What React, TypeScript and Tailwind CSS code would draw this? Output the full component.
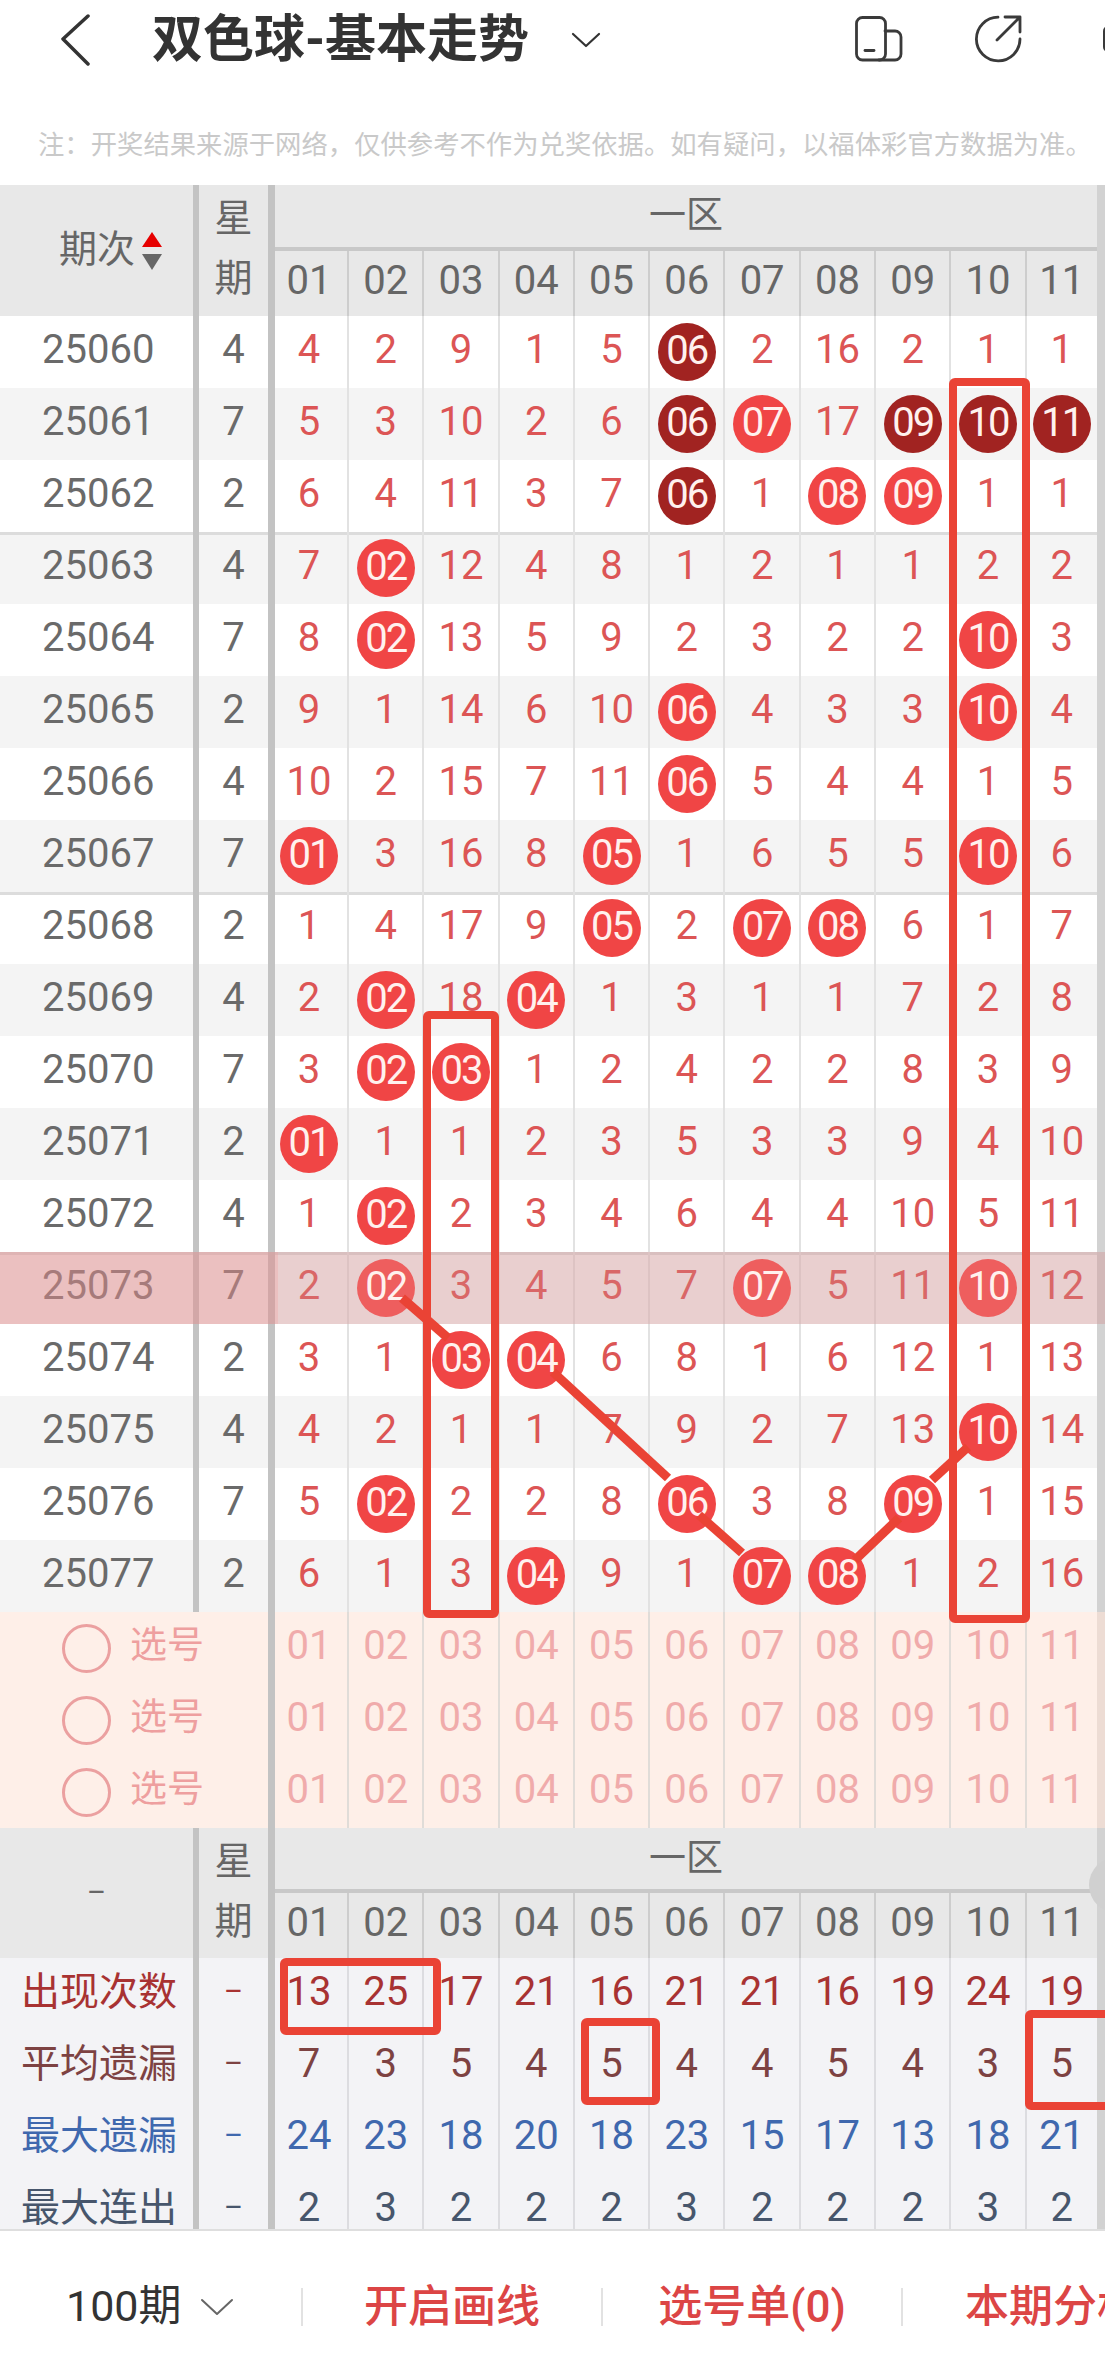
const FONT = "font-['Roboto','Noto_Sans_CJK_SC',sans-serif]";

// D = dark ball, B = bright ball
const DRAWS: [string, string, string][] = [
  ["25060", "4", "4 2 9 1 5 D06 2 16 2 1 1"],
  ["25061", "7", "5 3 10 2 6 D06 B07 17 D09 D10 D11"],
  ["25062", "2", "6 4 11 3 7 D06 1 B08 B09 1 1"],
  ["25063", "4", "7 B02 12 4 8 1 2 1 1 2 2"],
  ["25064", "7", "8 B02 13 5 9 2 3 2 2 B10 3"],
  ["25065", "2", "9 1 14 6 10 B06 4 3 3 B10 4"],
  ["25066", "4", "10 2 15 7 11 B06 5 4 4 1 5"],
  ["25067", "7", "B01 3 16 8 B05 1 6 5 5 B10 6"],
  ["25068", "2", "1 4 17 9 B05 2 B07 B08 6 1 7"],
  ["25069", "4", "2 B02 18 B04 1 3 1 1 7 2 8"],
  ["25070", "7", "3 B02 B03 1 2 4 2 2 8 3 9"],
  ["25071", "2", "B01 1 1 2 3 5 3 3 9 4 10"],
  ["25072", "4", "1 B02 2 3 4 6 4 4 10 5 11"],
  ["25073", "7", "2 B02 3 4 5 7 B07 5 11 B10 12"],
  ["25074", "2", "3 1 B03 B04 6 8 1 6 12 1 13"],
  ["25075", "4", "4 2 1 1 7 9 2 7 13 B10 14"],
  ["25076", "7", "5 B02 2 2 8 B06 3 8 B09 1 15"],
  ["25077", "2", "6 1 3 B04 9 1 B07 B08 1 2 16"],
];

const STATS = [
  { label: "出现次数", color: "text-[#a83232]", values: "13 25 17 21 16 21 21 16 19 24 19" },
  { label: "平均遗漏", color: "text-[#7d4242]", values: "7 3 5 4 5 4 4 5 4 3 5" },
  { label: "最大遗漏", color: "text-[#3f68ae]", values: "24 23 18 20 18 23 15 17 13 18 21" },
  { label: "最大连出", color: "text-[#47566c]", values: "2 3 2 2 2 3 2 2 2 3 2" },
];

const NUMBERS = ["01", "02", "03", "04", "05", "06", "07", "08", "09", "10", "11"];

function colWidth(i: number) {
  if (i === 0) return "w-[74px] pr-1 border-r-2";
  if (i === 10) return "w-[70.3px]";
  return "w-[75.3px] border-r-2";
}

function Divider({ wide }: { wide?: boolean }) {
  return <div className={`${wide ? "w-[7px]" : "w-[6px]"} shrink-0 self-stretch bg-[#c3c3c3]`} />;
}

function EdgeBar() {
  return <div className="w-[8px] shrink-0 self-stretch bg-[#d2d2d2]" />;
}

function Ball({ value, faded }: { value: string; faded?: boolean }) {
  const dark = value[0] === "D";
  return (
    <span
      className={`relative z-10 flex h-[58px] w-[58px] shrink-0 items-center justify-center rounded-full pb-[3px] text-[40px] tracking-[-2px] text-[#fff1ee] ${
        faded ? "bg-[#ee5e5e]" : dark ? "bg-[#a12321]" : "bg-[#f04545]"
      }`}
    >
      {value.slice(1)}
    </span>
  );
}

function Cell({ value, i, line, faded }: { value: string; i: number; line: string; faded?: boolean }) {
  const ball = value[0] === "D" || value[0] === "B";
  return (
    <div className={`flex h-full shrink-0 items-center justify-center ${colWidth(i)} ${line} ${ball ? "" : "pb-[5px]"}`}>
      {ball ? <Ball value={value} faded={faded} /> : value}
    </div>
  );
}

function DrawRow({ draw, index }: { draw: [string, string, string]; index: number }) {
  const [issue, week, cells] = draw;
  const grouped = index > 0 && index % 5 === 3;
  const highlighted = issue === "25073";
  return (
    <div
      className={`relative flex h-[72px] items-center text-[40px] ${index % 2 ? "bg-[#f4f4f4]" : "bg-white"} ${
        grouped ? "shadow-[inset_0_3px_0_#dcdcdc]" : ""
      }`}
    >
      <div className="w-[193px] shrink-0 pb-[5px] pl-[42px] text-[#6a6a6a]">{issue}</div>
      <Divider />
      <div className="w-[69px] shrink-0 pb-[5px] text-center text-[#6a6a6a]">{week}</div>
      <Divider wide />
      <div className="flex h-full text-[#dc5555]">
        {cells.split(" ").map((v, i) => (
          <Cell key={i} value={v} i={i} line="border-[#e2e2e2]" faded={highlighted} />
        ))}
      </div>
      <EdgeBar />
      {highlighted && (
        <>
          <div className="absolute left-0 top-0 h-full w-[278px] bg-[#e18c8c]/50" />
          <div className="absolute left-[278px] right-0 top-0 h-full bg-[#d38989]/35" />
        </>
      )}
    </div>
  );
}

function PickRow() {
  return (
    <div className="flex h-[72px] items-center bg-[#feefe8] text-[40px]">
      <div className="flex w-[268px] shrink-0 items-center pl-[62px] text-[37px] text-[#ee9f9f]">
        <span className="h-[49px] w-[49px] rounded-full border-[3px] border-[#eba0a0]" />
        <span className="ml-[19px] pb-[5px]">选号</span>
      </div>
      <Divider wide />
      <div className="flex h-full text-[#f0abab]">
        {NUMBERS.map((n, i) => (
          <Cell key={n} value={n} i={i} line="border-[#e0dcd8]" />
        ))}
      </div>
      <div className="w-[8px] shrink-0 self-stretch bg-[#eddcd4]" />
    </div>
  );
}

function TableHeader({ left, height }: { left: React.ReactNode; height: string }) {
  return (
    <div className={`flex ${height} bg-[#e8e8e8] text-[#666666]`}>
      <div className="flex w-[193px] shrink-0 items-center justify-center">{left}</div>
      <Divider />
      <div className="flex w-[69px] shrink-0 flex-col items-center gap-[22px] pt-[14px] text-[38px] leading-[38px]">
        <span>星</span>
        <span>期</span>
      </div>
      <Divider wide />
      <div className="flex flex-col">
        <div className="flex h-[67px] w-[822px] items-center justify-center border-b-[4px] border-[#c8c8c8] text-[37px]">
          一区
        </div>
        <div className="flex flex-1 text-[40px]">
          {NUMBERS.map((n, i) => (
            <Cell key={n} value={n} i={i} line="border-[#cdcdcd]" />
          ))}
        </div>
      </div>
      <EdgeBar />
    </div>
  );
}

function StatRow({ label, color, values }: { label: string; color: string; values: string }) {
  return (
    <div className={`flex h-[72px] items-center bg-[#f3f3f6] text-[40px] ${color}`}>
      <div className="w-[193px] shrink-0 pb-[4px] pl-[21px] text-[39px]">{label}</div>
      <Divider />
      <div className="w-[69px] shrink-0 pb-[5px] text-center text-[29px]">–</div>
      <Divider wide />
      <div className="flex h-full">
        {values.split(" ").map((v, i) => (
          <Cell key={i} value={v} i={i} line="border-[#dcdce0]" />
        ))}
      </div>
      <EdgeBar />
    </div>
  );
}

function Overlay() {
  return (
    <svg className="pointer-events-none absolute left-0 top-0 z-20" width="1105" height="2360" fill="none" stroke="#ea4335" strokeWidth="8">
      <rect x="953" y="382" width="73" height="1237" rx="2" />
      <rect x="427" y="1015" width="68" height="599" rx="2" />
      <rect x="284" y="1962" width="153" height="69" rx="2" />
      <rect x="585" y="2022" width="71" height="79" rx="2" />
      <rect x="1029" y="2014" width="90" height="92" rx="2" />
      <g strokeWidth="9">
        <path d="M402 1298 448 1338" />
        <path d="M553 1372 668 1478" />
        <path d="M699 1515 742 1553" />
        <path d="M855 1560 899 1518" />
        <path d="M932 1480 968 1447" />
      </g>
    </svg>
  );
}

export default function App() {
  return (
    <div className={`relative h-[2360px] w-[1105px] overflow-hidden bg-white ${FONT}`}>
      <div className="h-[185px]">
        <div className="flex h-[78px] items-center">
          <svg className="ml-[60px] mt-[2px] shrink-0" width="32" height="52" viewBox="0 0 32 52" fill="none" stroke="#333333" strokeWidth="3.5" strokeLinecap="round" strokeLinejoin="round">
            <path d="M28 2 3 25 28 50" />
          </svg>
          <h1 className="ml-[60px] shrink-0 whitespace-nowrap text-[51px] font-bold leading-none text-[#333333]">双色球-基本走势</h1>
          <svg className="ml-[42px] mt-[2px] shrink-0" width="30" height="16" viewBox="0 0 30 16" fill="none" stroke="#333333" strokeWidth="2.2" strokeLinecap="round" strokeLinejoin="round">
            <path d="M2 2 15 14 28 2" />
          </svg>
          <svg className="ml-[254px] shrink-0" width="48" height="46" viewBox="0 0 48 46" fill="none" stroke="#3a3a3a" strokeWidth="2.8" strokeLinecap="round">
            <rect x="1.5" y="1.5" width="29" height="42.5" rx="6" />
            <path d="M30 15h10a6 6 0 0 1 6 6v17a6 6 0 0 1-6 6H24" />
            <path d="M10 34.5h9" />
          </svg>
          <svg className="ml-[72px] shrink-0" width="48" height="48" viewBox="0 0 48 48" fill="none" stroke="#3a3a3a" strokeWidth="2.8" strokeLinecap="round" strokeLinejoin="round">
            <path d="M23 2.2A21.8 21.8 0 1 0 45 24" />
            <path d="M22 25 45 2M30 2h15v15" />
          </svg>
          <span className="ml-[80px] h-[26px] w-[6px] shrink-0 rounded-l-[5px] border-2 border-[#3a3a3a]" />
        </div>
        <p className="mt-[52px] whitespace-nowrap pl-[38px] text-[26.35px] leading-[30px] text-[#c9c9c9]">
          {"注\uFF1A开奖结果来源于网络\uFF0C仅供参考不作为兑奖依据。如有疑问\uFF0C以福体彩官方数据为准。"}
        </p>
      </div>

      <TableHeader
        height="h-[131px]"
        left={
          <div className="flex items-center pl-[28px] text-[38px]">
            <span className="pb-[2px]">期次</span>
            <svg className="ml-[7px]" width="20" height="38" viewBox="0 0 20 38">
              <path d="M10 0 20 15H0z" fill="#e60000" />
              <path d="M0 22H20L10 38z" fill="#666666" />
            </svg>
          </div>
        }
      />
      {DRAWS.map((draw, i) => (
        <DrawRow key={draw[0]} draw={draw} index={i} />
      ))}
      <PickRow />
      <PickRow />
      <PickRow />
      <TableHeader height="h-[130px]" left={<span className="text-[29px]">–</span>} />
      <div className="h-[271px] overflow-hidden">
        {STATS.map((s) => (
          <StatRow key={s.label} {...s} />
        ))}
      </div>

      <div className="flex h-[131px] items-center border-t-2 border-[#dedede] pt-[22px]">
        <div className="flex w-[301px] shrink-0 items-center pl-[66px] text-[43px] text-[#333333]">
          <span>100期</span>
          <svg className="ml-[18px]" width="34" height="18" viewBox="0 0 34 18" fill="none" stroke="#666666" strokeWidth="2" strokeLinecap="round" strokeLinejoin="round">
            <path d="M2 2 17 16 32 2" />
          </svg>
        </div>
        <div className="h-[38px] w-[2px] shrink-0 bg-[#e2e2e2]" />
        <div className="w-[298px] shrink-0 text-center text-[44px] font-medium text-[#dc4545]">开启画线</div>
        <div className="h-[38px] w-[2px] shrink-0 bg-[#e2e2e2]" />
        <div className="w-[298px] shrink-0 text-center text-[44px] font-medium text-[#dc4545]">选号单(0)</div>
        <div className="h-[38px] w-[2px] shrink-0 bg-[#e2e2e2]" />
        <div className="ml-[62px] shrink-0 whitespace-nowrap text-[44px] font-medium text-[#dc4545]">本期分析</div>
      </div>

      <span className="absolute left-[1089px] top-[1857px] h-[56px] w-[56px] rounded-full bg-[#d0d0d0]" />
      <Overlay />
    </div>
  );
}
